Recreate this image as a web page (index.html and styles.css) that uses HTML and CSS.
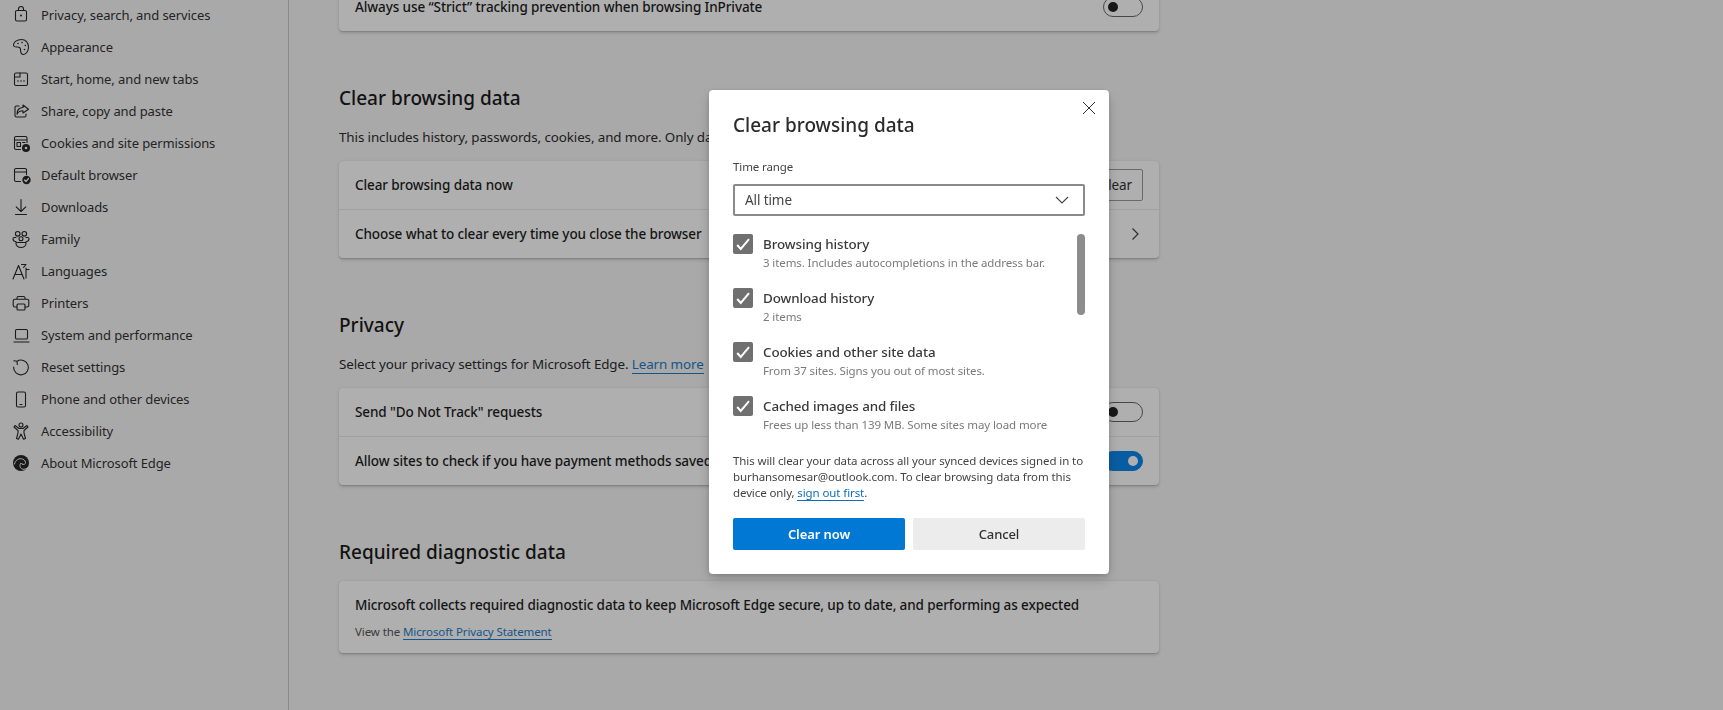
FILE: index.html
```html
<!DOCTYPE html>
<html lang="en">
<head>
<meta charset="utf-8">
<title>Settings</title>
<link rel="stylesheet" href="styles.css">
</head>
<body>
<div class="shell">
  <nav class="side">
    <a class="nav"><svg class="ic" viewBox="0 0 20 20"><rect x="4.5" y="5.5" width="11" height="10.5" rx="1.5"/><path d="M7.5 5.5V4a2.5 2.5 0 0 1 5 0v1.5"/><circle class="fill" cx="10" cy="10.5" r="1"/></svg><span>Privacy, search, and services</span></a>
    <a class="nav"><svg class="ic" viewBox="0 0 20 20"><path d="M10.5 2.5C6 2.5 2.5 5 2.5 8c0 1.5 1.5 2.2 3.5 2 2-.2 3.5.5 3.5 2.5 0 2 .5 5 3 5s5-3.5 5-7.5c0-4.5-3-7.5-7-7.5z"/><circle class="fill" cx="7" cy="6.5" r=".8"/><circle class="fill" cx="11" cy="5.5" r=".8"/><circle class="fill" cx="14.3" cy="8.5" r=".8"/><circle class="fill" cx="13.5" cy="12.5" r=".8"/></svg><span>Appearance</span></a>
    <a class="nav"><svg class="ic" viewBox="0 0 20 20"><rect x="3.5" y="4" width="13" height="12.5" rx="1.5"/><path d="M3.500 8H9V4"/><circle class="fill" cx="7" cy="12" r=".8"/><circle class="fill" cx="10" cy="12" r=".8"/><circle class="fill" cx="13" cy="12" r=".8"/></svg><span>Start, home, and new tabs</span></a>
    <a class="nav"><svg class="ic" viewBox="0 0 20 20"><path d="M8 5H5.500A1.500 1.500 0 0 0 4 6.500v8A1.500 1.500 0 0 0 5.500 16h8a1.500 1.500 0 0 0 1.500-1.500V13"/><path d="M12 4l5.500 4.200L12 12V9.700c-3 0-5 1-6 3.500 0-4 2-6.700 6-6.700z"/></svg><span>Share, copy and paste</span></a>
    <a class="nav"><svg class="ic" viewBox="0 0 20 20"><path d="M9.500 16.500H5A1.500 1.500 0 0 1 3.500 15V5A1.500 1.500 0 0 1 5 3.500h9.500A1.500 1.500 0 0 1 16 5v4.500M3.500 7H16"/><rect x="6" y="9.500" width="3.500" height="4"/><path d="M11.500 9.500H14"/><circle class="fill" cx="15" cy="15" r="4"/><circle class="hole" cx="15" cy="15" r="1.300"/></svg><span>Cookies and site permissions</span></a>
    <a class="nav"><svg class="ic" viewBox="0 0 20 20"><path d="M9.500 16.500H5A1.500 1.500 0 0 1 3.500 15V5A1.500 1.500 0 0 1 5 3.500h9A1.500 1.500 0 0 1 15.500 5v4.500M3.500 7h12"/><circle class="fill" cx="15.500" cy="15" r="4.200"/><path class="tick" d="M13.500 15l1.500 1.500 2.500-3"/></svg><span>Default browser</span></a>
    <a class="nav"><svg class="ic" viewBox="0 0 20 20"><path d="M10 2.500V14.500M5.200 9.800L10 14.500l4.800-4.700M4.500 17.500h11"/></svg><span>Downloads</span></a>
    <a class="nav"><svg class="ic" viewBox="0 0 20 20"><circle cx="6.700" cy="4.800" r="2.300"/><circle cx="13.300" cy="4.800" r="2.300"/><circle cx="10" cy="9.800" r="2"/><path d="M5 8.500H3.300c-.9 0-1.300.6-1.300 1.300 0 1.600 1.200 2.700 3 2.900M15 8.500h1.700c.9 0 1.300.6 1.300 1.300 0 1.600-1.200 2.700-3 2.900M5 13.500h10v1c0 2.300-2.200 4-5 4s-5-1.700-5-4z"/></svg><span>Family</span></a>
    <a class="nav"><svg class="ic" viewBox="0 0 20 20"><path d="M2 18L7.500 4.500 13 18M4 13.500h7M10.500 3.500h4.500l-2.500 3M15 7v10M15 8.500h3"/></svg><span>Languages</span></a>
    <a class="nav"><svg class="ic" viewBox="0 0 20 20"><path d="M6 14H4a1.800 1.800 0 0 1-1.800-1.800V8A1.800 1.800 0 0 1 4 6.200h12A1.800 1.800 0 0 1 17.800 8v4.200A1.800 1.800 0 0 1 16 14h-2M6 6V5a1.500 1.500 0 0 1 1.500-1.500h5A1.500 1.500 0 0 1 14 5v1"/><rect x="6" y="11" width="8" height="6" rx="1"/></svg><span>Printers</span></a>
    <a class="nav"><svg class="ic" viewBox="0 0 20 20"><path d="M3 17h15"/><rect x="4.500" y="4.500" width="12" height="9.500" rx="1.300"/></svg><span>System and performance</span></a>
    <a class="nav"><svg class="ic" viewBox="0 0 20 20"><path d="M6 4.200A7.400 7.400 0 1 1 2.600 10M2.800 3.800L6 4.200l.3 3.300"/></svg><span>Reset settings</span></a>
    <a class="nav"><svg class="ic" viewBox="0 0 20 20"><rect x="5.500" y="3" width="9" height="15" rx="1.500"/><path d="M9 15.500h2"/></svg><span>Phone and other devices</span></a>
    <a class="nav"><svg class="ic" viewBox="0 0 20 20"><circle cx="10" cy="4" r="2"/><path d="M4 4.500L8 7.500h4l4-3 1 1.500-4 3.500v2.500l1.500 5.500-2 .7L10 13l-2.500 5.200-2-.7L7 12V9.500L3 6z"/></svg><span>Accessibility</span></a>
    <a class="nav"><svg class="ic" viewBox="0 0 20 20"><circle class="fill" cx="10" cy="10" r="8"/><path class="swirl" d="M3.500 11c1-4.500 5-6 8-5 2.500.8 3.500 3 2.800 4.500-.8 1.500-3.800 1.200-3.800 0"/><path class="swirl" d="M9.500 10.500c-1.500 2.500 0 6 3.500 5.800 1.500-.1 2.700-.7 3.500-1.500"/></svg><span>About Microsoft Edge</span></a>
  </nav>
  <main class="main">
    <section class="card first">
      <div class="row"><span class="row-t">Always use “Strict” tracking prevention when browsing InPrivate</span><i class="tog"></i></div>
    </section>
    <h2 class="h h-clear">Clear browsing data</h2>
    <p class="desc">This includes history, passwords, cookies, and more. Only data from this profile will be deleted.</p>
    <section class="card">
      <div class="row line"><span class="row-t">Clear browsing data now</span><span class="ghost">Choose what to clear</span></div>
      <div class="row"><span class="row-t">Choose what to clear every time you close the browser</span><svg class="chev" viewBox="0 0 16 16"><path d="M5.500 2.500L11 8l-5.500 5.500"/></svg></div>
    </section>
    <h2 class="h h-priv">Privacy</h2>
    <p class="desc">Select your privacy settings for Microsoft Edge. <a class="lnk">Learn more</a></p>
    <section class="card">
      <div class="row line"><span class="row-t">Send "Do Not Track" requests</span><i class="tog"></i></div>
      <div class="row"><span class="row-t">Allow sites to check if you have payment methods saved</span><i class="tog on"></i></div>
    </section>
    <h2 class="h h-req">Required diagnostic data</h2>
    <section class="card diag">
      <div class="row-t">Microsoft collects required diagnostic data to keep Microsoft Edge secure, up to date, and performing as expected</div>
      <div class="small">View the <a class="lnk">Microsoft Privacy Statement</a></div>
    </section>
  </main>
</div>
<div class="overlay"></div>
<div class="dialog">
  <svg class="close" viewBox="0 0 14 14"><path d="M1 1l12 12M13 1L1 13"/></svg>
  <h1 class="d-title">Clear browsing data</h1>
  <div class="d-label">Time range</div>
  <div class="select"><span>All time</span><svg class="sel-chev" viewBox="0 0 14 8"><path d="M1 1l6 6 6-6"/></svg></div>
  <div class="list">
    <div class="item"><i class="cb"><svg viewBox="0 0 20 20"><path d="M4.200 11l3.600 4L16 5.200"/></svg></i><div><div class="i-t">Browsing history</div><div class="i-s">3 items. Includes autocompletions in the address bar.</div></div></div>
    <div class="item"><i class="cb"><svg viewBox="0 0 20 20"><path d="M4.200 11l3.600 4L16 5.200"/></svg></i><div><div class="i-t">Download history</div><div class="i-s">2 items</div></div></div>
    <div class="item"><i class="cb"><svg viewBox="0 0 20 20"><path d="M4.200 11l3.600 4L16 5.200"/></svg></i><div><div class="i-t">Cookies and other site data</div><div class="i-s">From 37 sites. Signs you out of most sites.</div></div></div>
    <div class="item"><i class="cb"><svg viewBox="0 0 20 20"><path d="M4.200 11l3.600 4L16 5.200"/></svg></i><div><div class="i-t">Cached images and files</div><div class="i-s">Frees up less than 139 MB. Some sites may load more</div></div></div>
    <div class="thumb"></div>
  </div>
  <p class="note">This will clear your data across all your synced devices signed in to burhansomesar@outlook.com. To clear browsing data from this device only, <a class="d-lnk">sign out first</a>.</p>
  <div class="btns"><button class="btn pri">Clear now</button><button class="btn sec">Cancel</button></div>
</div>
</body>
</html>
```
FILE: styles.css
```css
* { box-sizing: border-box; }
html, body { margin: 0; height: 710px; overflow: hidden; }
body { background: #f3f3f3; color: #262626; font-family: "Noto Sans", "Open Sans", sans-serif; font-size: 13px; letter-spacing: -0.1px; }
svg { display: block; }
.shell { display: flex; height: 710px; }
.side { flex: 0 0 289px; height: 711px; margin-top: -1px; padding: 0 0 0 11px; border-right: 1px solid #c4c4c4; }
.nav { display: flex; align-items: center; gap: 10px; height: 32px; color: #333; }
.ic { flex: 0 0 20px; width: 20px; height: 20px; fill: none; stroke: #262626; stroke-width: 1.1; stroke-linejoin: round; stroke-linecap: round; }
.ic .fill { fill: #262626; stroke: none; }
.ic .hole { fill: #f3f3f3; stroke: none; }
.ic .tick { stroke: #f3f3f3; stroke-width: 1.200; }
.ic .swirl { stroke: #f3f3f3; stroke-width: 1; }
.main { flex: 0 0 820px; margin-left: 50px; }
.card { background: #fbfbfb; border-radius: 4px; box-shadow: 0 1.600px 3.600px rgba(0,0,0,.16), 0 .3px .9px rgba(0,0,0,.12); overflow: hidden; }
.first { margin-top: -17px; }
.row { display: flex; align-items: center; justify-content: space-between; height: 48px; padding: 0 16px; }
.line { height: 49px; border-bottom: 1px solid #e6e6e6; }
.row-t { font-size: 13.500px; font-weight: 500; color: #1e1e1e; white-space: nowrap; }
.h { margin: 0; font-size: 19px; line-height: 28px; font-weight: 500; color: #1a1a1a; letter-spacing: 0; }
.h-clear { margin-top: 53px; }
.h-priv { margin-top: 53px; }
.h-req { margin-top: 53px; }
.desc { margin: 15px 0 14px; font-size: 13.400px; line-height: 20px; color: #2c2c2c; white-space: nowrap; }
.lnk { color: #1f7ac4; border-bottom: 1px solid #1f7ac4; }
.ghost { height: 32px; line-height: 30px; padding: 0 10px; border: 1px solid #999; border-radius: 2px; font-size: 13.500px; color: #333; white-space: nowrap; }
.chev { width: 16px; height: 16px; fill: none; stroke: #444; stroke-width: 1.200; }
.tog { position: relative; display: block; width: 40px; height: 20px; border: 1px solid #666; border-radius: 10px; background: transparent; flex: none; }
.tog::after { content: ""; position: absolute; left: 4px; top: 4px; width: 10px; height: 10px; border-radius: 50%; background: #222; }
.tog.on { background: #0c86e8; border-color: #0c86e8; }
.tog.on::after { left: 24px; background: #fbfbfb; }
.diag { height: 72px; margin-top: 15px; padding: 15px 16px 0; }
.small { margin-top: 10px; font-size: 11.500px; line-height: 16px; color: #555; }

.overlay { position: fixed; left: 0; top: 0; right: 0; bottom: 0; background: rgba(0,0,0,.3); }
.dialog { position: fixed; left: 709px; top: 90px; width: 400px; height: 484px; padding: 20px 24px; background: #fff; border-radius: 4px; box-shadow: 0 6px 14px rgba(0,0,0,.18), 0 1px 4px rgba(0,0,0,.14); }
.close { position: absolute; right: 13px; top: 11px; width: 14px; height: 14px; fill: none; stroke: #333; stroke-width: 1; }
.d-title { margin: 0; font-size: 19px; line-height: 30px; font-weight: 500; color: #2b2b2b; letter-spacing: 0; }
.d-label { margin-top: 19px; font-size: 11.500px; line-height: 16px; color: #444; }
.select { display: flex; align-items: center; justify-content: space-between; height: 32px; margin-top: 9px; padding: 0 14px 0 10px; border: 2px solid #8a8a8a; border-radius: 2px; font-size: 13.500px; color: #444; }
.sel-chev { width: 14px; height: 8px; fill: none; stroke: #444; stroke-width: 1.100; }
.list { position: relative; height: 200px; margin-top: 18px; }
.item { display: flex; gap: 10px; height: 54px; }
.cb { flex: 0 0 20px; width: 20px; height: 20px; border-radius: 2px; background: #707070; }
.cb svg { width: 20px; height: 20px; fill: none; stroke: #fff; stroke-width: 2; }
.i-t { font-size: 13.400px; font-weight: 500; line-height: 20px; color: #3a3a3a; }
.i-s { margin-top: 1px; font-size: 11.500px; line-height: 16px; color: #7a7a7a; white-space: nowrap; }
.thumb { position: absolute; right: 0; top: 0; width: 8px; height: 81px; border-radius: 4px; background: #8c8c8c; }
.note { margin: 19px 0 0; font-size: 11.500px; line-height: 16px; color: #444; }
.d-lnk { color: #0f6cbd; border-bottom: 1px solid #0f6cbd; }
.btns { display: flex; gap: 8px; margin-top: 17px; }
.btn { flex: 1; height: 32px; border: 0; border-radius: 2px; font: 500 13px "Noto Sans", "Open Sans", sans-serif; letter-spacing: -0.1px; }
.pri { background: #0078d4; color: #fff; font-weight: 600; }
.sec { background: #ececec; color: #333; }
```
